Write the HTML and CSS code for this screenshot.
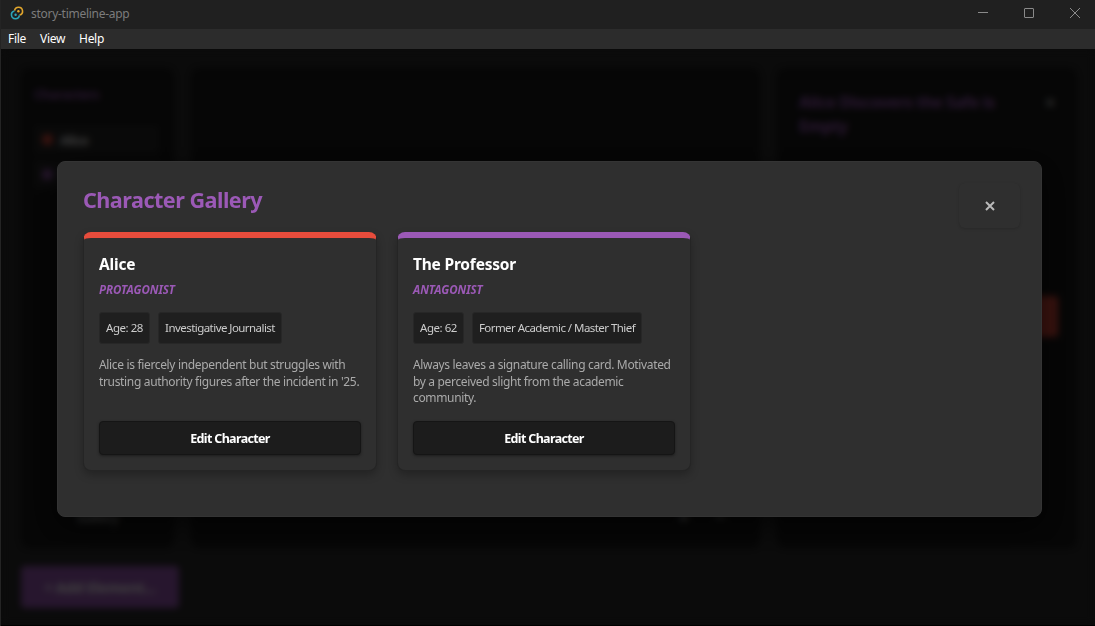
FILE: index.html
```html
<!DOCTYPE html>
<html lang="en">
  <head>
    <meta charset="UTF-8" />
    <meta name="viewport" content="width=device-width, initial-scale=1.0" />
    <title>story-timeline-app</title>
    <link rel="stylesheet" href="styles.css">
  </head>
  <body>
    <div class="window">
      <header class="titlebar">
        <svg class="app-icon" viewBox="0 0 14 14" fill="none" stroke-width="1.6">
          <path d="M4.6 4.6A4 4 0 1 1 9.6 9.1" stroke="#e0a52c" />
          <path d="M9.4 9.4A4 4 0 1 1 4.4 4.9" stroke="#2ba6b8" />
          <circle cx="8.4" cy="5.2" r="1.2" fill="#e0a52c" />
          <circle cx="5.6" cy="8.8" r="1.2" fill="#2ba6b8" />
        </svg>
        <span class="app-title">story-timeline-app</span>
        <div class="window-controls">
          <svg viewBox="0 0 12 12"><path d="M1 5.5h10" /></svg>
          <svg viewBox="0 0 12 12"><rect x="1.5" y="1.5" width="9" height="9" rx="0.5" /></svg>
          <svg viewBox="0 0 12 12"><path d="M1 1l10 10M11 1L1 11" /></svg>
        </div>
      </header>
      <nav class="menubar">
        <span>File</span>
        <span>View</span>
        <span>Help</span>
      </nav>

      <main class="app">
        <div class="workspace">
          <aside class="panel sidebar">
            <h3>Characters</h3>
            <div class="character-row"><i class="dot red"></i>Alice</div>
            <div class="character-row"><i class="dot purple"></i>The Professor</div>
            <div class="sidebar-link">Gallery</div>
          </aside>
          <section class="panel timeline">
            <div class="zoom-controls"><span>+</span><span>−</span></div>
          </section>
          <aside class="panel details">
            <div class="details-header">
              <h3>Alice Discovers the Safe is Empty</h3>
              <span>✕</span>
            </div>
            <div class="delete-button"></div>
          </aside>
        </div>
        <div class="add-button">+ Add Element...</div>

        <div class="overlay">
          <div class="modal">
            <div class="modal-header">
              <h2>Character Gallery</h2>
              <button class="close-button" aria-label="Close">
                <svg viewBox="0 0 10 10"><path d="M1 1l8 8M9 1L1 9" /></svg>
              </button>
            </div>
            <div class="gallery">
              <article class="card card-red">
                <h3>Alice</h3>
                <div class="role">PROTAGONIST</div>
                <div class="tags">
                  <span class="tag tag-age">Age: 28</span>
                  <span class="tag tag-journalist">Investigative Journalist</span>
                </div>
                <p>Alice is fiercely independent but struggles with<br>trusting authority figures after the incident in '25.</p>
                <button class="edit-button">Edit Character</button>
              </article>
              <article class="card card-purple">
                <h3>The Professor</h3>
                <div class="role">ANTAGONIST</div>
                <div class="tags">
                  <span class="tag tag-age">Age: 62</span>
                  <span class="tag tag-thief">Former Academic / Master Thief</span>
                </div>
                <p>Always leaves a signature calling card. Motivated<br>by a perceived slight from the academic<br>community.</p>
                <button class="edit-button">Edit Character</button>
              </article>
            </div>
          </div>
        </div>
      </main>
    </div>
  </body>
</html>
```

FILE: styles.css
```css
:root {
  --purple: #9b59b6;
  --red: #e74c3c;
  --surface: #2f2f2f;
}

* {
  box-sizing: border-box;
}

body {
  margin: 0;
  background: #202020;
  font-family: "Segoe UI", "Noto Sans", "Open Sans", sans-serif;
  color: #fff;
}

h2,
h3,
p {
  margin: 0;
}

.window {
  display: flex;
  flex-direction: column;
  width: 1095px;
  height: 626px;
  overflow: hidden;
  border-left: 1px solid #242424;
}

.titlebar {
  display: flex;
  align-items: center;
  flex: 0 0 29px;
  padding: 0 14px 3px 9px;
  background: #202020;
}

.app-icon {
  width: 14px;
  height: 14px;
}

.app-title {
  margin: 1px 0 0 7px;
  font-size: 12px;
  letter-spacing: -0.28px;
  color: #7c7c7c;
}

.window-controls {
  display: flex;
  gap: 34px;
  margin-left: auto;
}

.window-controls svg {
  width: 12px;
  height: 12px;
  fill: none;
  stroke: #8a8a8a;
}

.menubar {
  display: flex;
  align-items: center;
  gap: 14px;
  flex: 0 0 20px;
  padding: 0 0 1px 7px;
  background: #2c2c2c;
  font-size: 12px;
  letter-spacing: -0.3px;
}

.app {
  position: relative;
  flex: 1;
  padding: 19px 18px 17px 20px;
  background: #2c2c2c;
  border-bottom: 1px solid #000;
}

/* workspace behind the modal */
.workspace {
  display: flex;
  gap: 17px;
  height: 480px;
}

.panel {
  background: #181818;
  border-radius: 8px;
}

.sidebar {
  display: flex;
  flex-direction: column;
  flex: 0 0 153px;
  padding: 16px 13px;
}

.sidebar h3 {
  margin-bottom: 21px;
  font-size: 13px;
  line-height: 20px;
  letter-spacing: -0.5px;
  color: var(--purple);
}

.character-row {
  display: flex;
  align-items: center;
  gap: 7px;
  height: 29px;
  width: 125px;
  margin-bottom: 6px;
  padding-left: 8px;
  background: #262626;
  font-size: 13px;
  font-weight: bold;
  letter-spacing: -0.6px;
  white-space: nowrap;
  overflow: hidden;
  color: #eee;
}

.dot {
  flex: 0 0 11px;
  height: 11px;
  border-radius: 50%;
}

.dot.red {
  background: var(--red);
}

.dot.purple {
  background: var(--purple);
}

.sidebar-link {
  margin-top: auto;
  padding-bottom: 6px;
  text-align: center;
  font-size: 13px;
  font-weight: bold;
  letter-spacing: -0.6px;
  color: #ccc;
}

.timeline {
  display: flex;
  flex: 1;
  align-items: flex-end;
  justify-content: flex-end;
  padding: 18px 34px;
}

.zoom-controls {
  display: flex;
  gap: 25px;
  font-size: 20px;
  font-weight: bold;
  color: #ddd;
}

.details {
  flex: 0 0 300px;
  padding: 22px 19px 22px 22px;
}

.details-header {
  display: flex;
  justify-content: space-between;
  height: 206px;
}

.details-header h3 {
  width: 212px;
  font-size: 15.8px;
  line-height: 24px;
  letter-spacing: -0.25px;
  color: #ad63cb;
}

.details-header span {
  margin-right: 1px;
  font-size: 15px;
  line-height: 24px;
  color: #ddd;
}

.delete-button {
  height: 41px;
  border-radius: 4px;
  background: var(--red);
}

.add-button {
  display: flex;
  align-items: center;
  justify-content: center;
  width: 158px;
  height: 42px;
  margin-top: 18px;
  border-radius: 4px;
  background: var(--purple);
  font-size: 14.5px;
  font-weight: bold;
  letter-spacing: -0.3px;
  color: #fff;
}

.overlay {
  position: absolute;
  inset: 0;
  display: flex;
  align-items: center;
  justify-content: center;
  padding: 4px 0 0 3px;
  background: rgba(0, 0, 0, 0.75);
  backdrop-filter: blur(3.5px);
}

.modal {
  width: 985px;
  height: 356px;
  padding: 22px 21px 22px 25px;
  border: 1px solid #343434;
  border-radius: 8px;
  background: var(--surface);
  box-shadow: 0 10px 30px rgba(0, 0, 0, 0.6);
}

.modal-header {
  display: flex;
  justify-content: space-between;
  height: 48px;
}

.modal-header h2 {
  font-size: 21.6px;
  line-height: 32px;
  letter-spacing: -0.52px;
  color: var(--purple);
}

.close-button {
  display: flex;
  align-items: center;
  justify-content: center;
  width: 61px;
  height: 45px;
  margin-top: -1px;
  padding: 0;
  border: none;
  border-radius: 6px;
  background: var(--surface);
  box-shadow: 0 1px 3px rgba(0, 0, 0, 0.15);
}

.close-button svg {
  width: 10px;
  height: 10px;
  fill: none;
  stroke: #bbb;
  stroke-width: 2;
}

.gallery {
  display: grid;
  grid-template-columns: repeat(3, 294px);
  gap: 20px;
}

.card {
  display: flex;
  flex-direction: column;
  height: 239px;
  padding: 15px 15px 15px;
  border: 1px solid #252525;
  border-top: 6px solid;
  border-radius: 8px;
  background: var(--surface);
  box-shadow: 0 4px 8px rgba(0, 0, 0, 0.25);
}

.card-red {
  border-top-color: var(--red);
}

.card-purple {
  border-top-color: var(--purple);
}

.card h3 {
  font-size: 15.5px;
  line-height: 22px;
  letter-spacing: -0.2px;
}

.role {
  margin-top: 6px;
  font-size: 11.5px;
  font-style: italic;
  font-weight: bold;
  line-height: 18px;
  letter-spacing: -0.05px;
  color: var(--purple);
}

.tags {
  display: flex;
  gap: 8px;
  margin-top: 13px;
}

.tag {
  height: 32px;
  border: 1px solid #272727;
  border-radius: 3px;
  background: #1f1f1f;
  font-size: 11.5px;
  line-height: 30px;
  letter-spacing: -0.55px;
  text-align: center;
  white-space: nowrap;
  color: #ccc;
}

.tag-age {
  width: 51px;
  letter-spacing: -0.45px;
}

.tag-journalist {
  width: 124px;
}

.tag-thief {
  width: 170px;
}

.card p {
  margin-top: 13px;
  font-size: 12px;
  line-height: 16.6px;
  letter-spacing: -0.34px;
  white-space: nowrap;
  color: #aaa;
}

.edit-button {
  height: 34px;
  margin-top: auto;
  padding: 0;
  border: 1px solid #151515;
  border-radius: 4px;
  background: #1c1c1c;
  box-shadow: 0 1px 3px rgba(0, 0, 0, 0.4);
  font-family: inherit;
  font-size: 12.5px;
  font-weight: bold;
  letter-spacing: -0.65px;
  color: #fff;
}
```
